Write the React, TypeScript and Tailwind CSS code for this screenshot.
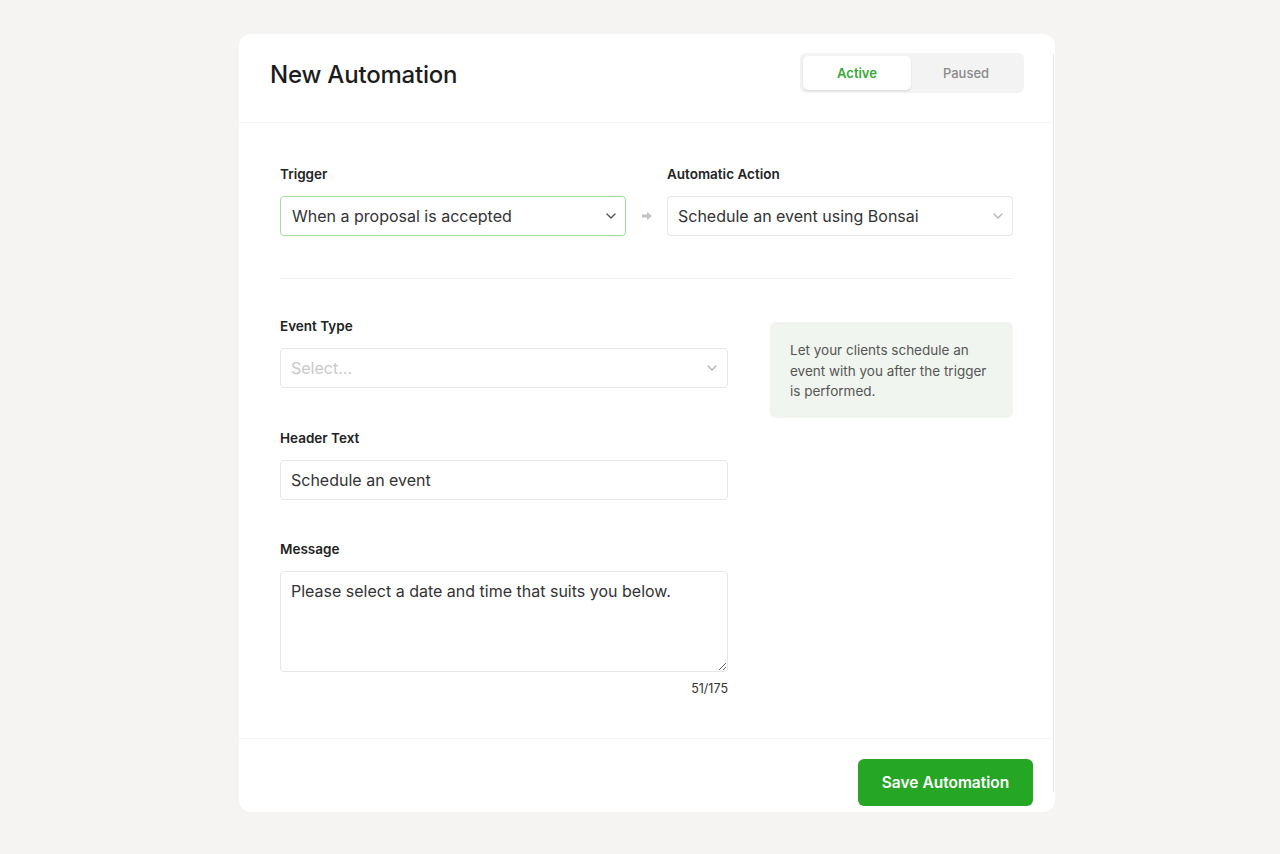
import React from "react";

const Chevron = ({ color = "#555" }: { color?: string }) => (
  <svg width="10" height="6" viewBox="0 0 10 6" fill="none">
    <path d="M1 1l4 4 4-4" stroke={color} strokeWidth="1.4" strokeLinecap="round" strokeLinejoin="round" />
  </svg>
);

export default function App() {
  return (
    <div className="min-h-[854px] w-full bg-[#f5f4f2] pt-[34px] pl-[239px]" style={{ fontFamily: "Inter, 'Noto Sans', sans-serif" }}>
      <div className="flex h-[778px] w-[816px] rounded-[12px] bg-white">
        <div className="flex flex-1 flex-col">
          {/* Header */}
          <div className="flex h-[89px] items-start justify-between border-b border-[#f4f4f3] pl-[31px] pr-[29px] pt-[19px]">
            <h1 className="mt-[6px] text-[24px] font-medium leading-[32px] tracking-[-0.2px] text-[#1c1c1c]">New Automation</h1>
            <div className="flex h-[40px] w-[224px] items-center rounded-[6px] bg-[#f3f3f3] p-[3px]">
              <div className="flex h-[34px] w-[108px] items-center justify-center rounded-[5px] bg-white pt-[1px] text-[13px] font-semibold text-[#36a936] shadow-[0_1px_2px_rgba(0,0,0,0.12)]">
                Active
              </div>
              <div className="flex h-[34px] flex-1 items-center justify-center pt-[1px] text-[13px] font-medium text-[#8a8a8a]">Paused</div>
            </div>
          </div>

          {/* Body */}
          <div className="flex-1 pl-[41px] pr-[40px] pt-[43px]">
            <div className="flex items-end">
              <div className="w-[346px]">
                <div className="mb-[13px] h-[17px] text-[13.5px] font-semibold leading-[17px] text-[#222]">Trigger</div>
                <div className="flex h-[40px] items-center justify-between rounded-[4px] border border-[#a6dba0] pl-[11px] pr-[9px] text-[16px] text-[#333]">
                  <span>When a proposal is accepted</span>
                  <Chevron color="#555" />
                </div>
              </div>
              <div className="flex h-[40px] w-[41px] items-center justify-center">
                <svg width="10" height="8" viewBox="0 0 10 8">
                  <path d="M0 2.6h5V0l5 4-5 4V5.4H0z" fill="#c4c4c4" />
                </svg>
              </div>
              <div className="flex-1">
                <div className="mb-[13px] h-[17px] text-[13.5px] font-semibold leading-[17px] text-[#222]">Automatic Action</div>
                <div className="flex h-[40px] items-center justify-between rounded-[4px] border border-[#e6e6e6] pl-[10px] pr-[9px] text-[16px] text-[#333]">
                  <span>Schedule an event using Bonsai</span>
                  <Chevron color="#b5b5b5" />
                </div>
              </div>
            </div>

            <div className="mt-[42px] h-px bg-[#f0f0ef]" />

            <div className="mt-[39px] flex gap-[42px]">
              <div className="w-[448px]">
                <div className="h-[17px] text-[13.5px] font-semibold leading-[17px] text-[#222]">Event Type</div>
                <div className="mt-[13px] flex h-[40px] items-center justify-between rounded-[4px] border border-[#e6e6e6] pl-[10px] pr-[10px] text-[16px] text-[#c8c8c8]">
                  <span>Select...</span>
                  <Chevron color="#b5b5b5" />
                </div>

                <div className="mt-[42px] h-[17px] text-[13.5px] font-semibold leading-[17px] text-[#222]">Header Text</div>
                <div className="mt-[13px] flex h-[40px] items-center rounded-[4px] border border-[#e6e6e6] pl-[10px] text-[16px] text-[#333]">
                  Schedule an event
                </div>

                <div className="mt-[41px] h-[17px] text-[13.5px] font-semibold leading-[17px] text-[#222]">Message</div>
                <textarea
                  readOnly
                  defaultValue="Please select a date and time that suits you below."
                  className="mt-[13px] block h-[101px] w-full resize-y rounded-[4px] border border-[#e6e6e6] px-[10px] pt-[9px] text-[16px] leading-[20px] text-[#333] outline-none"
                  style={{ fontFamily: "Inter, 'Noto Sans', sans-serif" }}
                />
                <div className="mt-[9px] text-right text-[12.5px] leading-[15px] text-[#333]">51/175</div>
              </div>
              <div className="flex-1">
                <div className="mt-[4px] rounded-[6px] bg-[#f1f5f0] pl-[20px] pr-[26px] pb-[16px] pt-[18px] text-[13.5px] leading-[20.5px] text-[#555]">
                  Let your clients schedule an event with you after the trigger is performed.
                </div>
              </div>
            </div>
          </div>

          {/* Footer */}
          <div className="flex h-[74px] justify-end border-t border-[#f4f4f3] pr-[20px] pt-[20px]">
            <button className="h-[47px] w-[175px] rounded-[6px] bg-[#25a625] text-[15.5px] font-semibold text-white">Save Automation</button>
          </div>
        </div>
        <div className="my-[20px] w-px bg-[#e8e8e8]" />
        <div className="w-px" />
      </div>
    </div>
  );
}
